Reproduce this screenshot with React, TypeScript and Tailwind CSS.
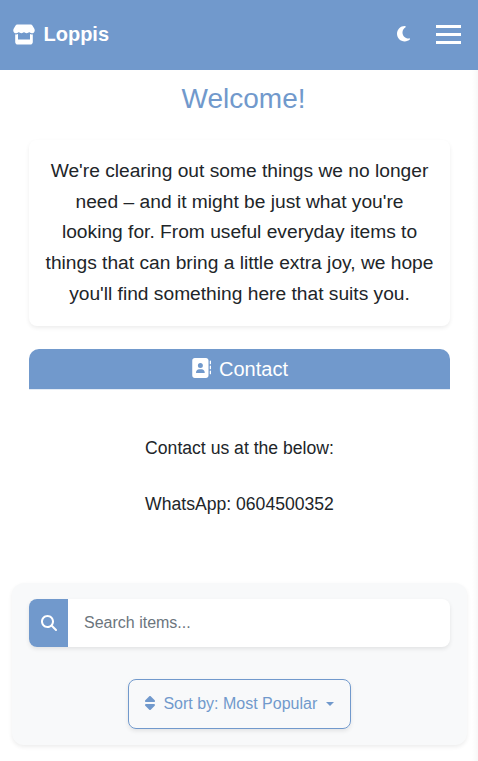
import { FaMoon, FaAddressBook, FaMagnifyingGlass, FaSort } from "react-icons/fa6";

function StoreIcon() {
  return (
    <svg viewBox="0 0 22 21" fill="currentColor" aria-hidden="true" className="mb-[2px] h-[21px] w-[22px]">
      <path d="M4.2 0.5H17.8C18.6 0.5 19 0.8 19.4 1.4L21.2 4.5C22.5 6.8 21.3 9.2 18.9 9.3C17.7 9.4 16.8 8.8 16.2 8.1C15.6 8.8 14.7 9.3 13.6 9.3C12.5 9.3 11.6 8.8 11 8.1C10.4 8.8 9.5 9.3 8.4 9.3C7.3 9.3 6.4 8.8 5.8 8.1C5.2 8.8 4.3 9.4 3.1 9.3C0.7 9.2 -0.5 6.8 0.8 4.5L2.6 1.4C3 0.8 3.4 0.5 4.2 0.5Z" />
      <path d="M2.2 10.2C3.1 10.5 4.1 10.4 5 10.1V15.5H17V10.1C17.9 10.4 18.9 10.5 19.8 10.2V17.9C19.8 19.4 18.8 20.5 17.3 20.5H4.7C3.2 20.5 2.2 19.4 2.2 17.9Z" />
    </svg>
  );
}

function Header() {
  return (
    <header className="flex h-[70px] items-center bg-[#7199cc] pr-[17px] pl-[13px] text-white">
      <StoreIcon />
      <span className="mb-[2px] ml-[8.5px] text-xl leading-7 font-bold">Loppis</span>
      <FaMoon className="mr-[26px] mb-[3px] ml-auto h-[17.6px] w-[13.2px]" />
      <button aria-label="Menu" className="mb-px flex w-[25px] flex-col gap-[5px]">
        <span className="h-[3px] bg-white" />
        <span className="h-[3px] bg-white" />
        <span className="h-[3px] bg-white" />
      </button>
    </header>
  );
}

function Intro() {
  return (
    <section>
      <h1 className="mt-3 pl-[9px] text-center text-[28px] leading-[34px] text-[#7199cc]">Welcome!</h1>
      <p className="mr-7 ml-[29px] mt-6 h-[186px] rounded-lg px-4 pt-4 text-center text-[19.2px] leading-[30.72px] shadow-[0_2px_4px_rgba(0,0,0,0.075)]">
        We're clearing out some things we no longer need – and it might be just what you're looking for. From useful
        everyday items to things that can bring a little extra joy, we hope you'll find something here that suits you.
      </p>
    </section>
  );
}

function Contact() {
  return (
    <section className="mr-7 ml-[29px] mt-[23px] text-center">
      <h2 className="flex h-10 items-center justify-center gap-2 rounded-t-[10px] bg-[#7199cc] text-xl leading-6 text-white">
        <FaAddressBook className="mb-[1.5px] size-5" />
        Contact
      </h2>
      <div className="h-px bg-[#e3ebf5]" />
      <div className="mt-11 text-[17.6px] leading-7">
        <p>Contact us at the below:</p>
        <p className="mt-7">WhatsApp: 0604500352</p>
      </div>
    </section>
  );
}

function SearchPanel() {
  return (
    <section className="mr-[11px] ml-3 mt-[65px] flex h-[162px] flex-col items-center rounded-xl bg-[#f8f9fa] px-[17px] pt-4 shadow-[0_2px_4px_rgba(0,0,0,0.075)]">
      <div className="flex h-12 w-full overflow-hidden rounded-lg bg-white shadow-[0_2px_4px_rgba(0,0,0,0.09)]">
        <button aria-label="Search" className="flex w-[39px] items-center justify-center bg-[#7199cc] text-white">
          <FaMagnifyingGlass className="size-4" />
        </button>
        <input
          className="min-w-0 flex-1 px-4 text-base outline-none placeholder:text-[#6c757d]"
          placeholder="Search items..."
        />
      </div>
      <button className="mt-8 flex h-[50px] w-[223px] items-center rounded-lg border border-[#7199cc] pl-4 text-base text-[#7199cc] shadow-[0_2px_4px_rgba(0,0,0,0.09)]">
        <FaSort className="mb-[2px] h-4 w-[10px]" />
        <span className="ml-[8.4px] whitespace-nowrap">Sort by: Most Popular</span>
        <span className="mb-px ml-[8.4px] border-x-4 border-t-4 border-x-transparent border-t-[#7199cc]" />
      </button>
    </section>
  );
}

export default function App() {
  return (
    <div className="relative h-[761px] overflow-hidden bg-white font-['Liberation_Sans',Arial,sans-serif] text-[#212529]">
      <Header />
      <Intro />
      <Contact />
      <SearchPanel />
      <div className="absolute top-[70px] right-0 bottom-0 w-[6px] bg-linear-to-r from-transparent to-black/[0.03]" />
    </div>
  );
}
